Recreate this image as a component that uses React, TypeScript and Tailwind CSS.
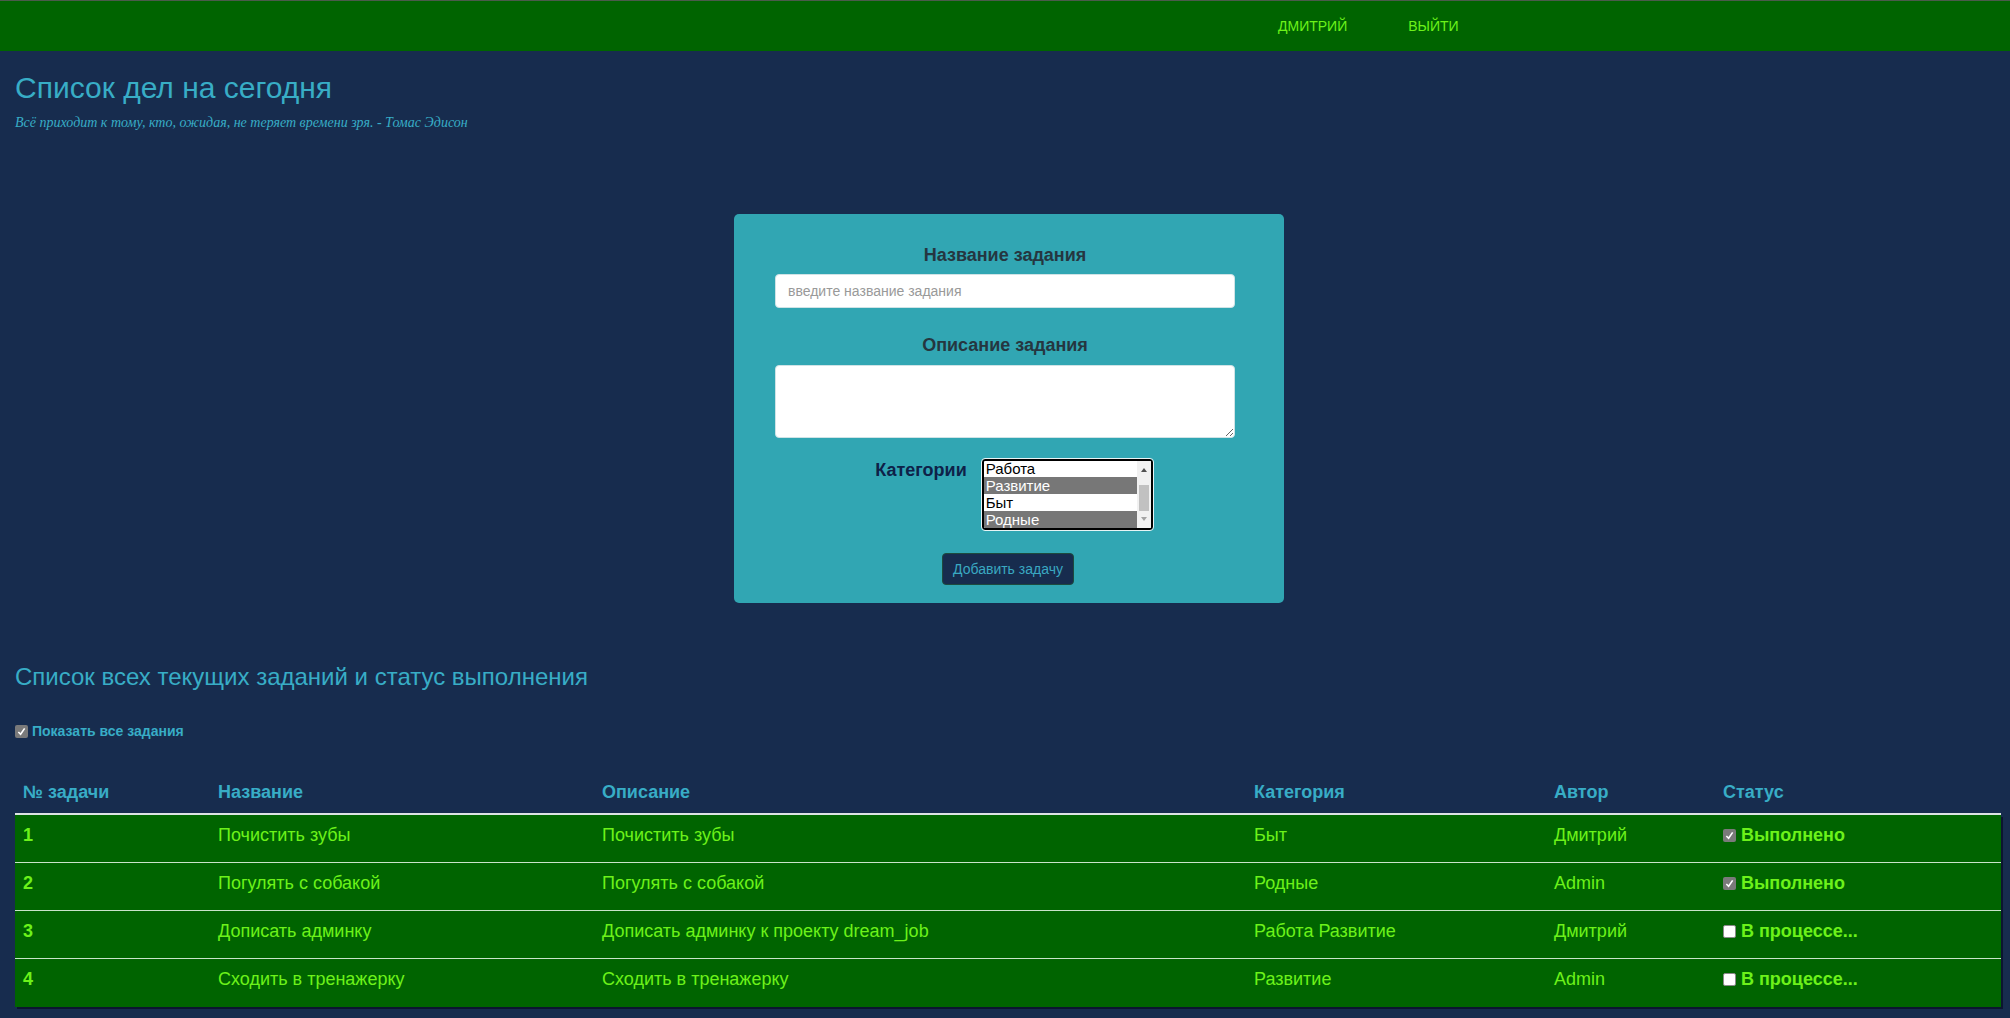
import React from "react";

const rows = [
  { n: "1", name: "Почистить зубы", desc: "Почистить зубы", cat: "Быт", author: "Дмитрий", done: true },
  { n: "2", name: "Погулять с собакой", desc: "Погулять с собакой", cat: "Родные", author: "Admin", done: true },
  { n: "3", name: "Дописать админку", desc: "Дописать админку к проекту dream_job", cat: "Работа Развитие", author: "Дмитрий", done: false },
  { n: "4", name: "Сходить в тренажерку", desc: "Сходить в тренажерку", cat: "Развитие", author: "Admin", done: false },
];

function CheckBox({ checked }: { checked: boolean }) {
  return checked ? (
    <span className="inline-flex h-[13px] w-[13px] items-center justify-center rounded-[2px] bg-[#7a7a7a]">
      <svg width="9" height="9" viewBox="0 0 10 10">
        <path d="M1.5 5.5 L4 8 L8.5 1.5" fill="none" stroke="#fff" strokeWidth="1.8" />
      </svg>
    </span>
  ) : (
    <span className="inline-block h-[13px] w-[13px] rounded-[2px] border border-[#8a8a8a] bg-white" />
  );
}

const grid = "grid grid-cols-[195px_384px_652px_300px_169px_1fr]";

export default function App() {
  return (
    <div className="min-h-[1018px] bg-[#172c4e] font-['Liberation_Sans',Arial,sans-serif]">
      <nav className="flex h-[51px] items-center border-t border-[#4b5b4b] bg-[#006400] text-[14px] uppercase text-[#6cf21a]">
        <div className="ml-[1278px] flex gap-[61px]">
          <span>Дмитрий</span>
          <span>Выйти</span>
        </div>
      </nav>

      <div className="pl-[15px] pr-[9px]">
        <h2 className="mt-[20px] text-[30px] leading-[33px] text-[#38adc6]">Список дел на сегодня</h2>
        <p className="mt-[10px] font-['Liberation_Serif',serif] text-[14px] italic leading-[18px] text-[#38adc6]">
          Всё приходит к тому, кто, ожидая, не теряет времени зря. - Томас Эдисон
        </p>

        <div className="mt-[82px] flex justify-center">
          <div className="ml-[2px] flex w-[550px] flex-col items-center rounded-[5px] bg-[#31a6b3] pb-[18px] pr-[8px] pt-[31px]">
            <label className="text-[18px] font-bold leading-[20px] text-[#253640]">Название задания</label>
            <input
              className="mt-[9px] h-[34px] w-[460px] rounded-[4px] border border-[#cfe3e6] bg-white px-[12px] text-[14px] text-[#555] placeholder:text-[#999] outline-none"
              placeholder="введите название задания"
            />
            <label className="mt-[27px] text-[18px] font-bold leading-[20px] text-[#253640]">Описание задания</label>
            <textarea className="mt-[10px] h-[73px] w-[460px] rounded-[4px] border border-[#cfe3e6] bg-white outline-none" />
            <div className="ml-[18px] mt-[21px] flex items-start gap-[15px]">
              <span className="mt-[1px] text-[18px] font-bold leading-[20px] text-[#0e2148]">Категории</span>
              <div className="flex h-[71px] w-[171px] overflow-hidden rounded-[3px] border-2 border-black bg-white outline outline-1 outline-[#e8f4f5] text-[15px] leading-[17px]">
                <div className="-mt-[1px] flex flex-1 flex-col">
                  <div className="h-[17px] pl-[2px] text-black">Работа</div>
                  <div className="h-[17px] bg-[#777] pl-[2px] text-white">Развитие</div>
                  <div className="h-[17px] pl-[2px] text-black">Быт</div>
                  <div className="h-[17px] bg-[#777] pl-[2px] text-white">Родные</div>
                </div>
                <div className="flex w-[14px] flex-col items-center bg-[#f1f1f1]">
                  <svg width="8" height="14" viewBox="0 0 8 14" className="mt-[2px]">
                    <path d="M1 9 L4 5 L7 9 Z" fill="#505050" />
                  </svg>
                  <div className="mt-[8px] h-[26px] w-[10px] bg-[#c1c1c1]" />
                  <svg width="8" height="12" viewBox="0 0 8 12" className="mt-[2px]">
                    <path d="M1 4 L4 8 L7 4 Z" fill="#a3a3a3" />
                  </svg>
                </div>
              </div>
            </div>
            <button className="ml-[6px] mt-[23px] h-[32px] w-[132px] rounded-[4px] border border-[#1d4a3e] bg-[#172c4e] text-[14px] text-[#3aa9c2]">
              Добавить задачу
            </button>
          </div>
        </div>

        <h3 className="mt-[61px] text-[24px] leading-[26px] text-[#38adc6]">
          Список всех текущих заданий и статус выполнения
        </h3>
        <label className="mt-[33px] flex items-center gap-[4px] text-[14px] font-bold leading-[16px] text-[#38adc6]">
          <CheckBox checked />
          Показать все задания
        </label>

        <div className="mt-[33px]">
          <div className={`${grid} h-[43px] items-center border-b-2 border-[#dde3e3] text-[18px] font-bold text-[#38adc6]`}>
            <div className="pl-[8px]">№ задачи</div>
            <div className="pl-[8px]">Название</div>
            <div className="pl-[8px]">Описание</div>
            <div className="pl-[8px]">Категория</div>
            <div className="pl-[8px]">Автор</div>
            <div className="pl-[8px]">Статус</div>
          </div>
          <div className="shadow-[2px_2px_0_#0c1530]">
            {rows.map((r, i) => (
              <div
                key={r.n}
                className={`${grid} h-[48px] bg-[#006400] pt-[7px] text-[18px] leading-[26px] text-[#6cf21a] ${i < rows.length - 1 ? "border-b border-[#c9e4c9]" : ""}`}
              >
                <div className="pl-[8px] font-bold">{r.n}</div>
                <div className="pl-[8px]">{r.name}</div>
                <div className="pl-[8px]">{r.desc}</div>
                <div className="pl-[8px]">{r.cat}</div>
                <div className="pl-[8px]">{r.author}</div>
                <div className="flex h-[26px] items-center gap-[5px] pl-[8px] font-bold">
                  <CheckBox checked={r.done} />
                  {r.done ? "Выполнено" : "В процессе..."}
                </div>
              </div>
            ))}
          </div>
        </div>
      </div>
    </div>
  );
}
